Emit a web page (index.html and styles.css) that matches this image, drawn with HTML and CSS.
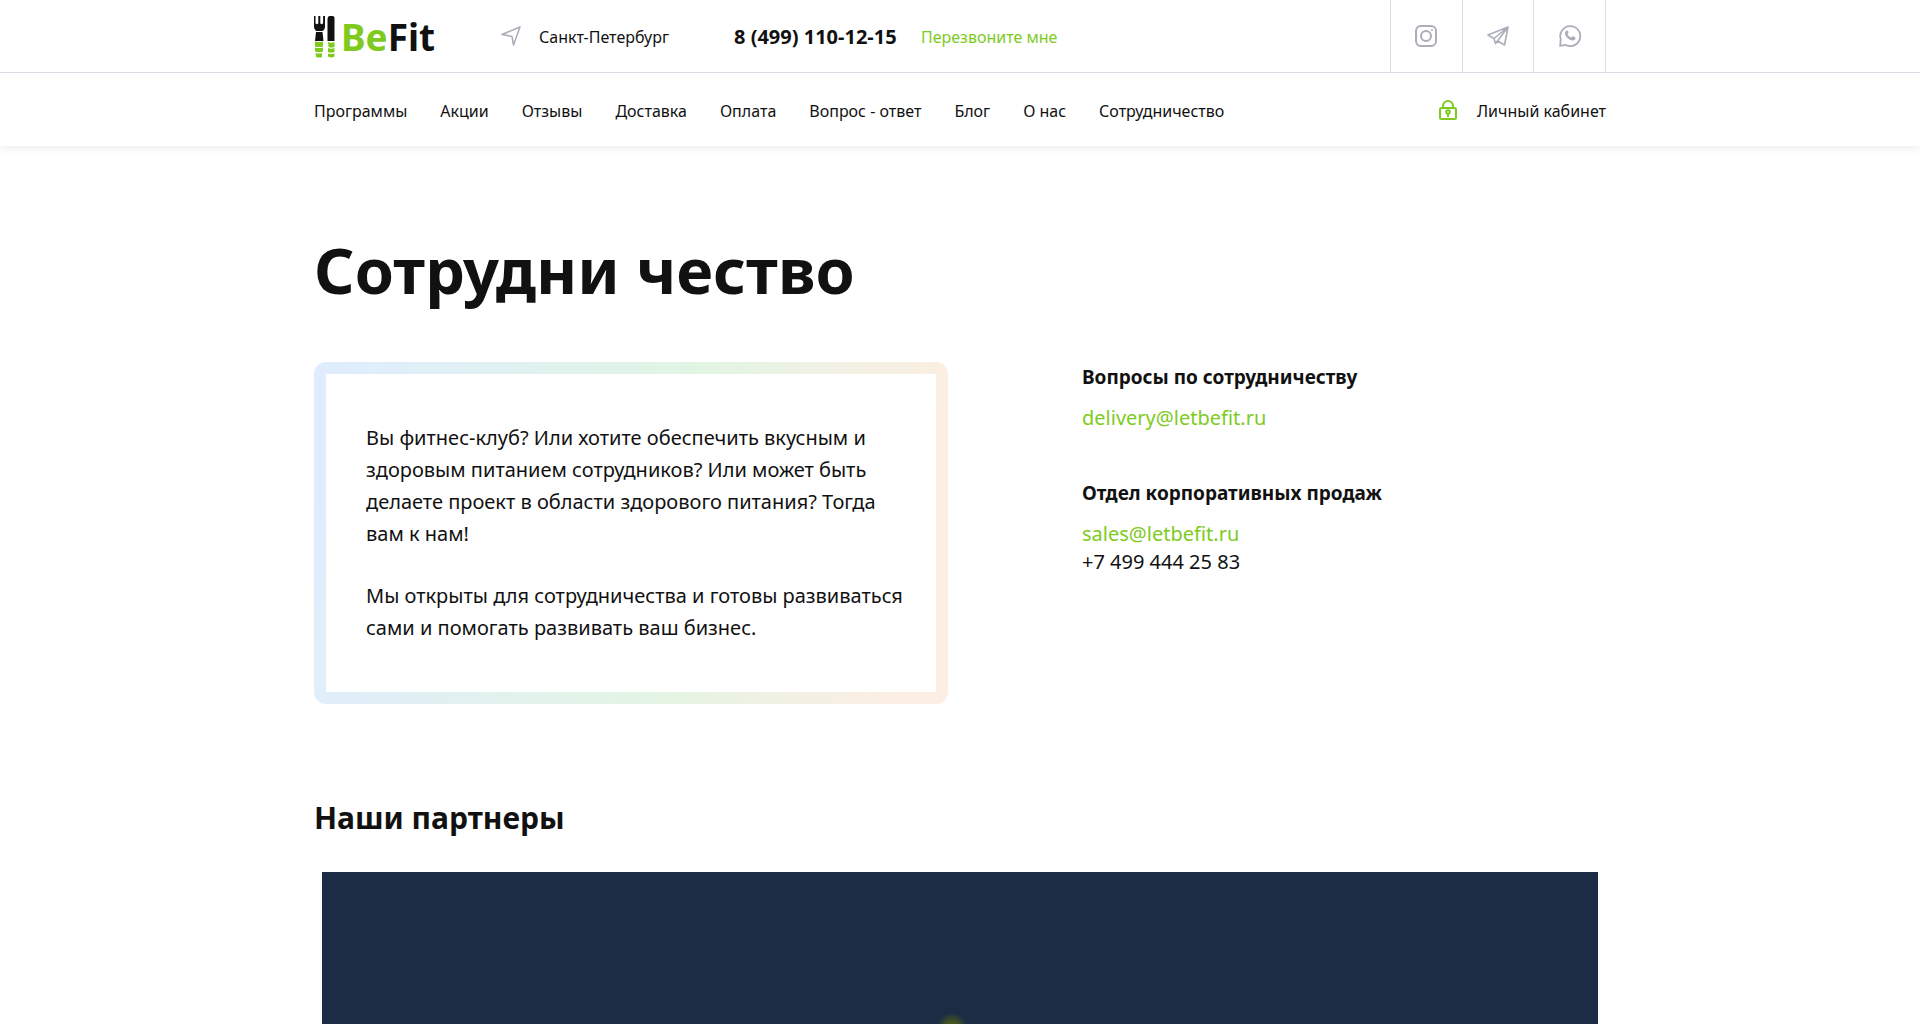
FILE: index.html
```html
<!DOCTYPE html>
<html lang="ru">
<head>
<meta charset="utf-8">
<meta name="viewport" content="width=device-width, initial-scale=1">
<title>Сотрудничество — BeFit</title>
<link rel="stylesheet" href="styles.css">
</head>
<body>
<header class="header">
  <div class="topbar">
    <div class="container topbar-row">
      <a class="logo" href="#" aria-label="BeFit">
        <svg class="logo-mark" width="21" height="42" viewBox="0 0 21 42" aria-hidden="true">
          <path fill="#111" d="M0 0h1.500v7c0 1.500 2.800 1.500 2.800 0V0h2v7c0 1.500 2.800 1.500 2.800 0V0H11v10c0 3-1 4-2.500 5h-6C1 14 0 13 0 10z"/>
          <path fill="#111" d="M2 16h6.500l1 9H1zM15.500 0h3c1.500 0 2 1 2 2.500V25h-7V4c0-3 1-4 2-4z"/>
          <path fill="#7ecb1e" d="M1 25.500q4 1 8 0v5q-4 1-8 0zM1 31.500q4 1 8 0v4q-4 1-8 0zM1.500 37q3 1 6.500 0v4q-3 1-6 0zM14 26q3 1.500 6.500 0v5q-3 1-6 0zM14 32q3 1.500 6.500 0v4q-3 1.500-6.500 0zM14 37.500q3 1 6.500 0v3q-3 2-6.500 0z"/>
        </svg>
        <span class="logo-text"><span class="logo-accent">Be</span>Fit</span>
      </a>
      <a class="city" href="#">
        <svg width="20" height="20" viewBox="0 0 20 20" fill="none" stroke="#a9abb6" stroke-width="1.500" stroke-linejoin="round" aria-hidden="true"><path d="M19 1 1 8.500l10 2L12.500 19z"/></svg>
        <span>Санкт-Петербург</span>
      </a>
      <a class="phone" href="tel:+74991101215">8 (499) 110-12-15</a>
      <button class="callback" type="button">Перезвоните мне</button>
      <div class="socials">
        <a class="social" href="#" aria-label="Instagram">
          <svg width="22" height="22" viewBox="0 0 22 22" fill="none" stroke="#abadb8" stroke-width="2" aria-hidden="true"><rect x="1" y="1" width="20" height="20" rx="5"/><circle cx="11" cy="11" r="5"/><circle cx="17" cy="5" r="1" fill="#abadb8" stroke="none"/></svg>
        </a>
        <a class="social" href="#" aria-label="Telegram">
          <svg width="22" height="22" viewBox="0 0 22 22" fill="none" stroke="#abadb8" stroke-width="1.600" stroke-linejoin="round" aria-hidden="true"><path d="M21 2 1 10l6 3.500L21 2l-3.500 18-7-4L21 2M7 13.500l1.500 5 2-2.500"/></svg>
        </a>
        <a class="social" href="#" aria-label="WhatsApp">
          <svg width="22" height="22" viewBox="0 0 22 22" fill="none" stroke="#abadb8" stroke-width="1.800" aria-hidden="true"><path d="M1.200 20.800 1.700 14a10 10 0 1 1 5 6z"/><path fill="#abadb8" stroke="none" d="M7.300 5.800c-2.500 2-1 5 1.200 7.200 2.300 2.200 5.300 3.500 7.500 1.500.8-.8.600-1.800 0-2.200l-2-1c-1-.3-1.200 1.300-2 1.300-1.300-.4-3-2-3.400-3.300 0-.7 1.200-1.100 1-2l-1-1.700z"/></svg>
        </a>
      </div>
    </div>
  </div>
  <div class="container navbar">
    <nav class="menu">
      <a href="#">Программы</a>
      <a href="#">Акции</a>
      <a href="#">Отзывы</a>
      <a href="#">Доставка</a>
      <a href="#">Оплата</a>
      <a href="#">Вопрос - ответ</a>
      <a href="#">Блог</a>
      <a href="#">О нас</a>
      <a href="#">Сотрудничество</a>
    </nav>
    <a class="account" href="#">
      <svg width="18" height="20" viewBox="0 0 18 20" fill="none" stroke="#7ecb1e" stroke-width="2" aria-hidden="true"><rect x="1" y="8" width="16" height="11" rx="1.500"/><path d="M4 8V6a5 5 0 0 1 10 0v2"/><circle cx="9" cy="12" r="1.800"/><path d="M9 14v3"/></svg>
      <span>Личный кабинет</span>
    </a>
  </div>
</header>
<main class="container">
  <h1 class="title">Сотрудни чество</h1>
  <div class="columns">
    <section class="frame">
      <div class="frame-body">
        <p>Вы фитнес-клуб? Или хотите обеспечить вкусным и здоровым питанием сотрудников? Или может быть делаете проект в области здорового питания? Тогда вам к нам!</p>
        <p>Мы открыты для сотрудничества и готовы развиваться сами и помогать развивать ваш бизнес.</p>
      </div>
    </section>
    <div class="contacts">
      <section class="contact">
        <h3>Вопросы по сотрудничеству</h3>
        <a href="mailto:delivery@letbefit.ru">delivery@letbefit.ru</a>
      </section>
      <section class="contact">
        <h3>Отдел корпоративных продаж</h3>
        <a href="mailto:sales@letbefit.ru">sales@letbefit.ru</a>
        <span>+7 499 444 25 83</span>
      </section>
    </div>
  </div>
  <section class="partners">
    <h2>Наши партнеры</h2>
    <div class="banner"></div>
  </section>
</main>
</body>
</html>
```
FILE: styles.css
```css
* { box-sizing: border-box; }

body {
  margin: 0;
  background: #fff;
  color: #111;
  font: 16px/24px "Noto Sans", "Open Sans", sans-serif;
}

a { color: inherit; text-decoration: none; }

h1, h2, h3, p { margin: 0; }

svg { flex: none; display: block; }

.container {
  width: 100%;
  max-width: 1324px;
  margin: 0 auto;
  padding: 0 16px;
}

.header { box-shadow: 0 0 10px rgba(40, 60, 90, 0.14); }

.topbar { border-bottom: 1px solid #dcdde6; }

.topbar-row {
  display: flex;
  align-items: center;
  height: 72px;
}

.logo {
  display: flex;
  align-items: center;
  gap: 6px;
  width: 187px;
  padding-top: 2px;
}

.logo-text {
  font-size: 37px;
  line-height: 42px;
  font-weight: 700;
}

.logo-accent { color: #7ecb1e; }

.city {
  display: flex;
  align-items: center;
  gap: 18px;
  width: 233px;
}

.phone {
  width: 187px;
  padding-top: 2px;
  font-size: 20px;
  font-weight: 700;
}

.callback {
  padding: 2px 0 0;
  border: 0;
  background: none;
  color: #7ecb1e;
  font: inherit;
}

.city span,
.account span { padding-top: 2px; }

.socials {
  display: flex;
  align-self: stretch;
  width: 216px;
  margin-left: auto;
  border-right: 1px solid #dcdde6;
}

.social {
  display: flex;
  flex: 1;
  align-items: center;
  justify-content: center;
  border-left: 1px solid #dcdde6;
}

.navbar {
  display: flex;
  align-items: center;
  justify-content: space-between;
  height: 73px;
}

.menu { display: flex; gap: 33px; padding-top: 2px; }

.account { display: flex; align-items: center; gap: 20px; }

.title {
  margin-top: 86px;
  font-size: 63px;
  line-height: 76px;
  font-weight: 700;
}

.columns {
  display: flex;
  align-items: flex-start;
  gap: 134px;
  margin-top: 54px;
}

.frame {
  flex: 0 1 634px;
  padding: 12px;
  border-radius: 12px;
  background: linear-gradient(100deg, #e0ecff 0%, #e2f5e4 55%, #fceee3 92%);
}

.frame-body {
  display: flex;
  flex-direction: column;
  gap: 30px;
  padding: 48px 30px 48px 40px;
  background: #fff;
  font-size: 20px;
  line-height: 32px;
}

.contacts {
  display: flex;
  flex-direction: column;
  gap: 46px;
  font-size: 20px;
  line-height: 28px;
}

.contact { display: flex; flex-direction: column; }

.contact h3 {
  margin-bottom: 12px;
  font-size: 19px;
  line-height: 30px;
}

.contact a { color: #7ecb1e; }

.partners { margin-top: 94px; }

.partners h2 {
  font-size: 30px;
  line-height: 40px;
}

.banner {
  height: 320px;
  margin: 34px 8px 0;
  background: radial-gradient(ellipse 15px 15px at 630px 156px, #46561c 40%, #1b2d45 100%);
}
```
